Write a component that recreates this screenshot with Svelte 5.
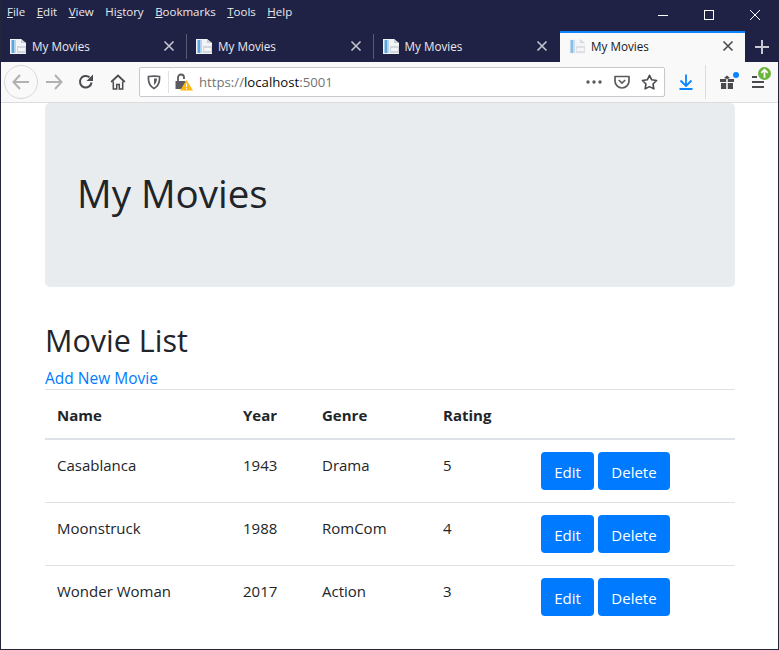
<script>
  const tabs = [
    { id: 1, active: false },
    { id: 2, active: false },
    { id: 3, active: false },
    { id: 4, active: true }
  ];
  const movies = [
    { name: 'Casablanca', year: 1943, genre: 'Drama', rating: 5 },
    { name: 'Moonstruck', year: 1988, genre: 'RomCom', rating: 4 },
    { name: 'Wonder Woman', year: 2017, genre: 'Action', rating: 3 }
  ];
</script>

<div class="window">
  <header class="chrome">
    <div class="titlebar">
      <nav class="menu">
        <span><u>F</u>ile</span>
        <span><u>E</u>dit</span>
        <span><u>V</u>iew</span>
        <span>Hi<u>s</u>tory</span>
        <span><u>B</u>ookmarks</span>
        <span><u>T</u>ools</span>
        <span><u>H</u>elp</span>
      </nav>
      <div class="winctl">
        <svg width="12" height="12" viewBox="0 0 12 12"><path d="M1 6.500h10" stroke="#fff" fill="none"/></svg>
        <svg width="12" height="12" viewBox="0 0 12 12"><rect x="1.500" y="1.500" width="9" height="9" stroke="#fff" fill="none"/></svg>
        <svg width="12" height="12" viewBox="0 0 12 12"><path d="M1 1l10 10M11 1L1 11" stroke="#fff" fill="none"/></svg>
      </div>
    </div>
    <div class="tabstrip">
      {#each tabs as t (t.id)}
        <div class="tab" class:active={t.active}>
          <svg class="fav" width="16" height="16" viewBox="0 0 16 16">
            <path d="M0 1h11l5 4v11H0z" fill="#f1f3f6"/>
            <path d="M1.500 2h3v13h-3z" fill="#5aa5dc"/>
            <path d="M4.500 2h1.500v13H4.500z" fill="#b7d6ee"/>
            <path d="M11 1l5 4h-5z" fill="#c9ccd2"/>
            <path d="M7 8h9v7H7z" fill="#d3d6dc"/>
            <path d="M8 10h7v3H8z" fill="#f4f5f7"/>
          </svg>
          <span class="tabtitle">My Movies</span>
          <svg class="tabx" width="12" height="12" viewBox="0 0 12 12"><path d="M1.500 1.500l9 9M10.500 1.500l-9 9" stroke="currentColor" stroke-width="1.600" fill="none"/></svg>
        </div>
      {/each}
      <svg class="newtab" width="16" height="16" viewBox="0 0 16 16"><path d="M8 1v14M1 8h14" stroke="#c8c9d2" stroke-width="2" fill="none"/></svg>
    </div>
    <div class="toolbar">
      <div class="backbtn">
        <svg width="18" height="16" viewBox="0 0 18 16"><path d="M8 1L1.500 8 8 15M2 8h15" stroke="#b1b1b3" stroke-width="2" fill="none"/></svg>
      </div>
      <svg class="fwd" width="18" height="16" viewBox="0 0 18 16"><path d="M10 1l6.500 7-6.500 7M16 8H1" stroke="#b1b1b3" stroke-width="2" fill="none"/></svg>
      <svg class="reload" width="16" height="16" viewBox="0 0 16 16"><path d="M13.500 8.500A5.800 5.800 0 1 1 11.500 3.300" stroke="#4a4a4f" stroke-width="2" fill="none"/><path d="M15 0.500V7H8.500z" fill="#4a4a4f"/></svg>
      <svg class="home" width="16" height="16" viewBox="0 0 16 16"><path d="M1.200 8L8 1.500 14.800 8" stroke="#4a4a4f" stroke-width="1.800" fill="none"/><path d="M3.300 7.500V15h3.400v-4.500h2.600V15h3.400V7.500" stroke="#4a4a4f" stroke-width="1.500" fill="none"/></svg>
      <div class="urlbar">
        <svg class="shield" width="14" height="16" viewBox="0 0 14 16"><path d="M1.500 2.500C4.500 2 9.500 2 12.500 2.500c.4 5-1 9.500-5.500 12C2.500 12 1.100 7.500 1.500 2.500z" stroke="#5a5a5f" stroke-width="1.700" fill="none"/><path d="M7 4.500h3c0 3-1 5-3 6.500z" fill="#5a5a5f"/></svg>
        <span class="sep"></span>
        <svg class="lock" width="18" height="18" viewBox="0 0 18 18"><path d="M3 8.500V4.500a3 3 0 0 1 6 0V6" stroke="#5a5a5f" stroke-width="1.800" fill="none"/><path d="M0.500 8h10v8h-10z" fill="#5a5a5f"/><path d="M11.500 7L18 17.500H5z" fill="#ffb70f"/><path d="M11.500 10.500v3.500M11.500 15v1.200" stroke="#fff" stroke-width="1.100"/></svg>
        <span class="url"><span class="dim">https://</span>localhost<span class="dim">:5001</span></span>
        <span class="grow"></span>
        <svg class="dots" width="16" height="4" viewBox="0 0 16 4"><circle cx="2" cy="2" r="1.700" fill="#5a5a5f"/><circle cx="8" cy="2" r="1.700" fill="#5a5a5f"/><circle cx="14" cy="2" r="1.700" fill="#5a5a5f"/></svg>
        <svg class="pocket" width="16" height="16" viewBox="0 0 16 16"><path d="M1 2.500h14V7a7 7 0 0 1-14 0z" stroke="#5a5a5f" stroke-width="1.700" fill="none" stroke-linejoin="round"/><path d="M4.800 6L8 9l3.200-3" stroke="#5a5a5f" stroke-width="1.700" fill="none"/></svg>
        <svg class="star" width="17" height="16" viewBox="0 0 17 16"><path d="M8.500 1.300l2.200 4.500 4.900.7-3.600 3.500.9 4.900-4.400-2.300-4.400 2.300.9-4.900L1.400 6.500l4.900-.7z" stroke="#4a4a4f" stroke-width="1.600" fill="none" stroke-linejoin="round"/></svg>
      </div>
      <svg class="dl" width="14" height="16" viewBox="0 0 14 16"><path d="M7 0.500v11M1.500 6.500L7 12l5.500-5.500M0.500 15h13" stroke="#0a84ff" stroke-width="1.800" fill="none"/></svg>
      <span class="tbsep"></span>
      <div class="gift">
        <svg width="16" height="16" viewBox="0 0 16 16"><path d="M1 5h6.200v3H1zM8.800 5H15v3H8.800zM2 9h5.200v6H2zM8.800 9H14v6H8.800z" fill="#4a4a4f"/><path d="M5 4l3-2.500L11 4 8 5z" fill="#4a4a4f"/></svg>
        <i class="bluedot"></i>
      </div>
      <div class="burger">
        <svg width="14" height="14" viewBox="0 0 14 14"><path d="M0 2h5M0 7h12M0 12h12" stroke="#4a4a4f" stroke-width="1.800" fill="none"/></svg>
        <svg class="update" width="13" height="13" viewBox="0 0 12 12"><circle cx="6" cy="6" r="6" fill="#6bb53c"/><path d="M6 10V3M3 5.500L6 2.500l3 3" stroke="#fff" stroke-width="1.600" fill="none"/></svg>
      </div>
    </div>
  </header>

  <main class="page">
    <section class="jumbotron">
      <h1>My Movies</h1>
    </section>
    <h2>Movie List</h2>
    <a class="addlink" href="#add">Add New Movie</a>
    <table>
      <thead>
        <tr>
          <th class="c-name">Name</th>
          <th class="c-year">Year</th>
          <th class="c-genre">Genre</th>
          <th class="c-rating">Rating</th>
          <th></th>
        </tr>
      </thead>
      <tbody>
        {#each movies as m (m.name)}
          <tr>
            <td>{m.name}</td>
            <td>{m.year}</td>
            <td>{m.genre}</td>
            <td>{m.rating}</td>
            <td>
              <div class="actions">
                <button class="edit">Edit</button>
                <button class="del">Delete</button>
              </div>
            </td>
          </tr>
        {/each}
      </tbody>
    </table>
  </main>
</div>

<style>
  :global(body) {
    margin: 0;
    background: #fff;
  }
  .window {
    box-sizing: border-box;
    width: 779px;
    height: 650px;
    border: 1px solid #23253a;
    border-top: 0;
    display: flex;
    flex-direction: column;
    overflow: hidden;
    font-family: "Open Sans", "Noto Sans", sans-serif;
    color: #212529;
    background: #fff;
  }
  .chrome {
    background: #1f2244;
    flex: none;
  }
  .titlebar {
    height: 31px;
    display: flex;
    justify-content: space-between;
  }
  .menu {
    display: flex;
    gap: 11.500px;
    padding: 3px 0 0 6px;
    font-size: 11.500px;
    line-height: 17px;
    color: #e9e9ef;
  }
  .winctl {
    display: flex;
    gap: 34px;
    padding: 9px 17px 0 0;
    height: 12px;
  }
  .tabstrip {
    height: 31px;
    display: flex;
    align-items: stretch;
  }
  .tab {
    box-sizing: border-box;
    width: 186.500px;
    display: flex;
    align-items: center;
    padding: 0 12px 2px 9px;
    gap: 6px;
    color: #e9e9ef;
    font-size: 11.700px;
    position: relative;
  }
  .tab:first-child { width: 186px; }
  .tab + .tab:not(.active)::before {
    content: "";
    position: absolute;
    left: -1px;
    top: 3px;
    bottom: 3px;
    width: 1px;
    background: #5a5c74;
  }
  .tab.active {
    background: #f9f9fa;
    color: #18181a;
    border-top: 2px solid #0a84ff;
    width: 185px;
    padding: 0 11px 3px 9px;
  }
  .fav { flex: none; }
  .tabtitle { flex: 1; }
  .tabx { color: #c4c5cf; }
  .active .tabx { color: #4a4a4f; }
  .active .fav { opacity: 0.7; }
  .newtab { align-self: center; margin-left: 9px; }
  .toolbar {
    height: 41px;
    box-sizing: border-box;
    background: #f9f9fa;
    border-bottom: 1px solid #dcdcde;
    display: flex;
    align-items: center;
    position: relative;
  }
  .backbtn {
    box-sizing: border-box;
    width: 34px;
    height: 34px;
    margin-left: 3px;
    border: 1px solid #d8d8da;
    border-radius: 50%;
    display: flex;
    align-items: center;
    justify-content: center;
  }
  .fwd { margin-left: 7px; }
  .reload { margin-left: 15px; }
  .home { margin-left: 16px; }
  .urlbar {
    box-sizing: border-box;
    margin-left: 13px;
    width: 526px;
    height: 30px;
    background: #fff;
    border: 1px solid #c8c8ca;
    border-radius: 2px;
    display: flex;
    align-items: center;
    font-size: 13.200px;
    color: #0c0c0d;
  }
  .shield { margin-left: 7px; }
  .sep { width: 1px; height: 22px; background: #e2e2e4; margin-left: 7px; }
  .lock { margin-left: 6px; }
  .url { margin-left: 6px; }
  .dim { color: #737373; }
  .grow { flex: 1; }
  .pocket { margin-left: 12px; }
  .star { margin: 0 6px 0 11px; }
  .dl { margin-left: 14px; }
  .tbsep { width: 1px; height: 34px; background: #dcdcde; margin-left: 12px; }
  .gift { position: relative; margin-left: 13px; width: 16px; height: 16px; }
  .gift svg { display: block; }
  .bluedot {
    position: absolute;
    top: -2px;
    right: -4px;
    width: 6px;
    height: 6px;
    border-radius: 50%;
    background: #0a84ff;
  }
  .burger { position: relative; margin-left: 17px; width: 14px; height: 14px; }
  .burger svg { display: block; }
  .burger .update { position: absolute; top: -8px; left: 6px; }
  .page {
    padding: 0 43px 0 44px;
    flex: 1;
  }
  .jumbotron {
    box-sizing: border-box;
    height: 184px;
    background: #e9ecef;
    border-radius: 5px;
    padding: 66px 32px 0;
  }
  h1 {
    margin: 0;
    font-size: 38.500px;
    line-height: 48px;
    font-weight: 400;
  }
  h2 {
    margin: 34px 0 6px;
    font-size: 30.500px;
    line-height: 38px;
    font-weight: 400;
  }
  .addlink {
    display: block;
    color: #007bff;
    font-size: 15.500px;
    line-height: 22px;
    padding-top: 2px;
    text-decoration: none;
  }
  table {
    width: 690px;
    border-collapse: collapse;
    table-layout: fixed;
    font-size: 15px;
    line-height: 24px;
  }
  th {
    text-align: left;
    padding: 13px 12px 11px;
    font-weight: 700;
    border-top: 1px solid #dee2e6;
    border-bottom: 2px solid #dee2e6;
  }
  td {
    padding: 12px;
    vertical-align: top;
    border-top: 1px solid #dee2e6;
  }
  tbody td:not(:last-child) { padding-top: 13px; }
  thead + tbody tr:first-child td { border-top: 0; }
  .c-name { width: 162px; }
  .c-year { width: 55px; }
  .c-genre { width: 97px; }
  .c-rating { width: 74px; }
  .actions { display: flex; gap: 4px; }
  button {
    height: 38px;
    padding: 2px 0 0;
    border: 0;
    border-radius: 4px;
    background: #007bff;
    color: #fff;
    font: inherit;
    margin: 0;
  }
  .edit { width: 53px; }
  .del { width: 72px; }
</style>
